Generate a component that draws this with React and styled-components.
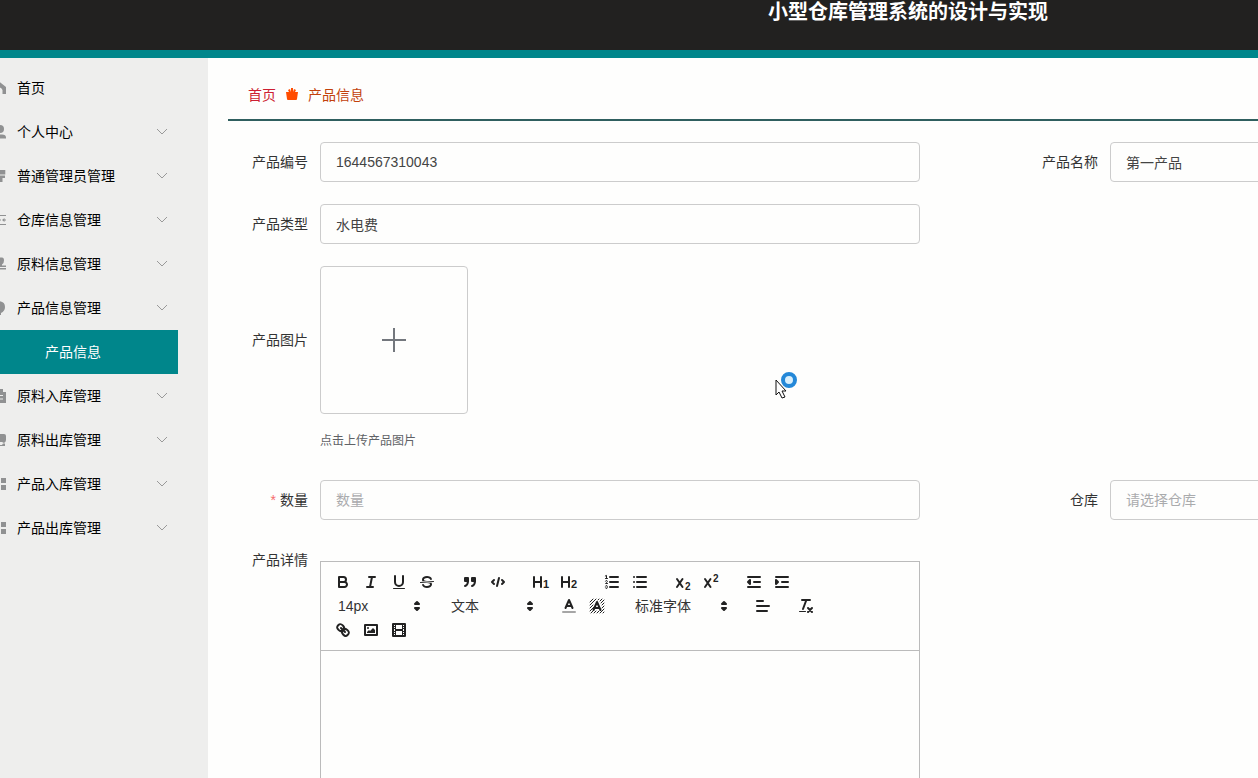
import React from "react";
import styled, { createGlobalStyle } from "styled-components";

const MENU = [
  { name: "首页", icon: "home" },
  { name: "个人中心", icon: "user", more: true },
  { name: "普通管理员管理", icon: "board", more: true },
  { name: "仓库信息管理", icon: "list", more: true },
  { name: "原料信息管理", icon: "stamp", more: true },
  { name: "产品信息管理", icon: "pin", more: true, children: ["产品信息"] },
  { name: "原料入库管理", icon: "clipboard", more: true },
  { name: "原料出库管理", icon: "monitor", more: true },
  { name: "产品入库管理", icon: "grid", more: true },
  { name: "产品出库管理", icon: "grid", more: true },
];

const menuIcons = {
  home: <path d="M9 2L18 9v7h-3.5v-4q-1-3-5.5-3t-5.500 3v4H0V9z" />,
  user: (
    <>
      <circle cx="12" cy="7" r="4" />
      <path d="M4 16.500v-1q0-3 4-3h6q4 0 4 3v1z" />
    </>
  ),
  board: <path d="M1 4h16.300v4.500H1zM1 9.500h16v2.500h-2.500v4h-3v-4H1z" />,
  list: <path d="M1 5h17v1H1zM1 14h17v1H1zM8 9.500h5v1H8zM14 10l2.500-2v1.500H18v1h-1.500V12z" />,
  stamp: <path d="M10 3.500h4q2 0 2 3t-2 4v1h4v1.500H6v-1.500h4zM6 14h12v1.500H6z" />,
  pin: <path d="M10 3q7 0 7 6q0 4-4 6v2h-3q-7-4-7-8q0-6 7-6z" />,
  clipboard: (
    <path
      fillRule="evenodd"
      d="M6 3h9v3h3v11H2V6h4zM9 9v1h6V9zM9 12.500v1h6v-1z"
    />
  ),
  monitor: <path d="M2 4h14q2 0 2 2v4q0 2-2 3l-2-1H2zM6 15h8l1-1.500 2 0v2.500H6z" />,
  grid: <path d="M6 4h5v5H6zM13 4h5v5h-5zM6 11h5v5H6zM13 11h5v5h-5z" />,
};

const tools = {
  加粗: (
    <>
      <path d="M5,4H9.5A2.5,2.5,0,0,1,12,6.5v0A2.5,2.5,0,0,1,9.5,9H5V4Z" />
      <path d="M5,9h5.5A2.5,2.5,0,0,1,13,11.5v0A2.5,2.5,0,0,1,10.5,14H5V9Z" />
    </>
  ),
  斜体: <path d="M7 4h6M5 14h6M8 14L10 4" />,
  下划线: (
    <>
      <path d="M5,3V9a4.012,4.012,0,0,0,4,4H9a4.012,4.012,0,0,0,4-4V3" />
      <rect className="fill" height="1" rx="0.5" width="12" x="3" y="15" />
    </>
  ),
  删除线: (
    <>
      <path className="thin" d="M15.5 8.5L2.5 9.5" />
      <path
        className="fill"
        d="M9.007,8C6.542,7.791,6,7.519,6,6.5,6,5.792,7.283,5,9,5c1.571,0,2.765.679,2.969,1.309a1,1,0,0,0,1.9-.617C13.356,4.106,11.354,3,9,3,6.2,3,4,4.538,4,6.5a3.2,3.2,0,0,0,.5,1.843Z"
      />
      <path
        className="fill"
        d="M8.984,10C11.457,10.208,12,10.479,12,11.5c0,.708-1.283,1.5-3,1.5-1.571,0-2.765-.679-2.969-1.309a1,1,0,1,0-1.9.617C4.644,13.894,6.646,15,9,15c2.8,0,5-1.538,5-3.5a3.2,3.2,0,0,0-.5-1.843Z"
      />
    </>
  ),
  引用: (
    <>
      <rect className="both" height="3" width="3" x="4" y="5" />
      <rect className="both" height="3" width="3" x="11" y="5" />
      <path d="M7,8c0,4.031-3,5-3,5M14,8c0,4.031-3,5-3,5" />
    </>
  ),
  代码: <path d="M5 7L3 9l2 2M13 7l2 2-2 2M10 5L8 13" />,
  一级标题: (
    <>
      <path d="M2 4v10M9 4v10M9 9H2" />
      <text x="11" y="15">1</text>
    </>
  ),
  二级标题: (
    <>
      <path d="M2 4v10M9 4v10M9 9H2" />
      <text x="11" y="15">2</text>
    </>
  ),
  有序列表: (
    <>
      <path d="M7 4h8M7 9h8M7 14h8" />
      <path className="thin" d="M2.5 5.5h2M2.3 3l1.2-.6v3" />
      <path
        className="thin"
        d="M4.5,10.5h-2c0-.234,1.85-1.076,1.85-2.234A0.959,0.959,0,0,0,2.5,8.156"
      />
      <path
        className="thin"
        d="M2.5,14.846a0.959,0.959,0,0,0,1.85-.109A0.7,0.7,0,0,0,3.75,14a0.688,0.688,0,0,0,.6-0.736,0.959,0.959,0,0,0-1.85-.109"
      />
    </>
  ),
  无序列表: <path d="M6 4h9M6 9h9M6 14h9M3 4h.01M3 9h.01M3 14h.01" />,
  下标: (
    <>
      <path d="M3 6l5.500 8M8.500 6l-5.500 8" />
      <text className="light" x="11" y="17">2</text>
    </>
  ),
  上标: (
    <>
      <path d="M3 6l5.500 8M8.500 6l-5.500 8" />
      <text className="light" x="11" y="9">2</text>
    </>
  ),
  减少缩进: (
    <>
      <path d="M3 14h12M3 4h12M9 9h6" />
      <path className="both" d="M5 7v4L3 9z" />
    </>
  ),
  增加缩进: (
    <>
      <path d="M3 14h12M3 4h12M9 9h6" />
      <path className="both" d="M3 7v4l2-2z" />
    </>
  ),
  文字颜色: (
    <>
      <path opacity="0.4" d="M3 15h12" />
      <path d="M5.5 11L9 3l3.5 8M11.63 9H6.38" />
    </>
  ),
  背景颜色: (
    <>
      <path
        className="thin"
        d="M2 5l3-3M2 8l6-6M2 11l3-3M2 14l4-4M3 16l3-3M6 16l2-2M9 16l2-2M12 16l4-4M15 16l1-1M10 3l1-1M12 4l2-2M13 6l3-3M14 8l2-2M14 11l2-2"
      />
      <path d="M5.5 13L9 5l3.5 8M11.63 11H6.38" />
    </>
  ),
  对齐方式: <path d="M3 9h12M3 14h10M3 4h6" />,
  清除格式: (
    <>
      <path d="M5 3h8M6 12l3.35-9M11 11l4 4M15 11l-4 4" />
      <rect className="fill" height="1" rx="0.5" width="7" x="2" y="14" />
    </>
  ),
  链接: (
    <>
      <path d="M7 7l4 4" />
      <path d="M8.9,4.577a3.476,3.476,0,0,1,.36,4.679A3.476,3.476,0,0,1,4.577,8.9C3.185,7.5,2.035,6.4,4.217,4.217S7.5,3.185,8.9,4.577Z" />
      <path d="M13.423,9.1a3.476,3.476,0,0,0-4.679-.36,3.476,3.476,0,0,0,.36,4.679c1.392,1.392,2.5,2.542,4.679.36S14.815,10.5,13.423,9.1Z" />
    </>
  ),
  图片: (
    <>
      <rect height="10" width="12" x="3" y="4" />
      <circle className="fill" cx="6" cy="7" r="1" />
      <path className="fill" d="M5 12v-1l2-2 1 1 3-3 2 2v3z" />
    </>
  ),
  视频: (
    <>
      <rect height="12" width="12" x="3" y="3" />
      <path
        className="fill"
        d="M5 3h1v12H5zM12 3h1v12h-1zM5 8h8v2H5zM3 5h3v1H3zM3 7h3v1H3zM3 10h3v1H3zM3 12h3v1H3zM12 5h3v1h-3zM12 7h3v1h-3zM12 10h3v1h-3zM12 12h3v1h-3z"
      />
    </>
  ),
};

const ToolGroup = ({ names }) => (
  <Group>
    {names.map((name) => (
      <Tool key={name} type="button" aria-label={name}>
        <ToolIcon viewBox="0 0 18 18">{tools[name]}</ToolIcon>
      </Tool>
    ))}
  </Group>
);

const ToolSelect = ({ label, value, wide }) => (
  <Group>
    <Picker $wide={wide}>
      <select aria-label={label} defaultValue={value}>
        <option>{value}</option>
      </select>
      <ToolIcon viewBox="0 0 18 18">
        <path className="both" d="M7 11l2 2 2-2zM7 7l2-2 2 2z" />
      </ToolIcon>
    </Picker>
  </Group>
);

const App = () => {
  return (
    <>
      <GlobalStyle />
      <Page>
        <Header>
          <h1>小型仓库管理系统的设计与实现</h1>
        </Header>
        <Body>
          <Sidebar>
            {MENU.map((item) => (
              <React.Fragment key={item.name}>
                <MenuItem href="#">
                  <MenuIcon viewBox="0 0 18 18">{menuIcons[item.icon]}</MenuIcon>
                  <span>{item.name}</span>
                  {item.more && (
                    <Arrow viewBox="0 0 12 12">
                      <path d="M1 4l5 5 5-5" />
                    </Arrow>
                  )}
                </MenuItem>
                {item.children?.map((child) => (
                  <SubItem href="#" key={child}>
                    {child}
                  </SubItem>
                ))}
              </React.Fragment>
            ))}
          </Sidebar>
          <Main>
            <Breadcrumb>
              <a href="#">首页</a>
              <svg viewBox="0 0 12 12" width="12" height="12">
                <path d="M0 4h12l-1 7q0 1-1 1H2q-1 0-1-1zM2 2l2-1 1 3H3zM5 0h2v4H5zM8 1l2 1-1 2H7z" />
              </svg>
              <span>产品信息</span>
            </Breadcrumb>
            <form>
              <Row>
                <Field>
                  <Label htmlFor="code">产品编号</Label>
                  <Input id="code" defaultValue="1644567310043" />
                </Field>
                <Field>
                  <Label htmlFor="name">产品名称</Label>
                  <Input id="name" defaultValue="第一产品" />
                </Field>
              </Row>
              <Row>
                <Field>
                  <Label htmlFor="type">产品类型</Label>
                  <Input id="type" defaultValue="水电费" />
                </Field>
              </Row>
              <Row>
                <Field>
                  <Label htmlFor="picture" $tall>
                    产品图片
                  </Label>
                  <Upload>
                    <UploadBox>
                      <input id="picture" type="file" />
                      <svg viewBox="0 0 24 24" width="24" height="24">
                        <path d="M12 0v24M0 12h24" />
                      </svg>
                    </UploadBox>
                    <Tip>点击上传产品图片</Tip>
                  </Upload>
                </Field>
              </Row>
              <Row $tight>
                <Field>
                  <Label htmlFor="count">
                    <Star>*</Star>数量
                  </Label>
                  <Input id="count" placeholder="数量" />
                </Field>
                <Field>
                  <Label htmlFor="store">仓库</Label>
                  <Select id="store">
                    <option>请选择仓库</option>
                  </Select>
                </Field>
              </Row>
              <Row>
                <Field>
                  <Label htmlFor="detail">产品详情</Label>
                  <Editor>
                    <Toolbar>
                      <ToolGroup names={["加粗", "斜体", "下划线", "删除线"]} />
                      <ToolGroup names={["引用", "代码"]} />
                      <ToolGroup names={["一级标题", "二级标题"]} />
                      <ToolGroup names={["有序列表", "无序列表"]} />
                      <ToolGroup names={["下标", "上标"]} />
                      <ToolGroup names={["减少缩进", "增加缩进"]} />
                      <ToolSelect label="字号" value="14px" />
                      <ToolSelect label="标题" value="文本" />
                      <ToolGroup names={["文字颜色", "背景颜色"]} />
                      <ToolSelect label="字体" value="标准字体" wide />
                      <ToolGroup names={["对齐方式"]} />
                      <ToolGroup names={["清除格式"]} />
                      <ToolGroup names={["链接", "图片", "视频"]} />
                    </Toolbar>
                    <TextArea id="detail" />
                  </Editor>
                </Field>
              </Row>
            </form>
          </Main>
        </Body>
        <Pointer viewBox="0 0 24 30" aria-hidden="true">
          <circle cx="15" cy="9" r="6" />
          <path d="M2 9v15l3-3 3 6 3-1-3-6h4z" />
        </Pointer>
      </Page>
    </>
  );
};

export default App;

const GlobalStyle = createGlobalStyle`
  * {
    box-sizing: border-box;
  }
  body {
    margin: 0;
    font-family: "Liberation Sans", "Noto Sans CJK SC", sans-serif;
    font-size: 14px;
    color: #333;
  }
  input, select, textarea, button {
    font: inherit;
  }
  a {
    text-decoration: none;
  }
`;

const Page = styled.div`
  position: relative;
  display: flex;
  flex-direction: column;
  height: 100vh;
  overflow: hidden;
  background: #fefefd;
`;
const Header = styled.header`
  flex: none;
  height: 58px;
  padding-left: 558px;
  background: #222120;
  border-bottom: 8px solid #00868b;
  text-align: center;
  h1 {
    margin: 0;
    font-size: 20px;
    line-height: 24px;
    color: #fff;
  }
`;
const Body = styled.div`
  flex: 1;
  display: flex;
  min-height: 0;
`;
const Sidebar = styled.nav`
  flex: none;
  width: 208px;
  padding: 8px 30px 0 0;
  background: #eeeeed;
`;
const MenuItem = styled.a`
  display: flex;
  align-items: center;
  height: 44px;
  padding: 0 10px 2px 0;
  color: #000;
  span {
    flex: 1;
  }
`;
const MenuIcon = styled.svg`
  width: 18px;
  height: 18px;
  margin: 0 11px 0 -12px;
  fill: #909192;
`;
const Arrow = styled.svg`
  width: 12px;
  height: 12px;
  fill: none;
  stroke: #999;
`;
const SubItem = styled.a`
  display: block;
  padding-left: 45px;
  line-height: 44px;
  background: #00868b;
  color: #fff;
`;
const Main = styled.main`
  flex: 1;
  min-width: 0;
  padding: 10px 0 0 20px;
  overflow: hidden;
`;
const Breadcrumb = styled.div`
  display: flex;
  align-items: center;
  gap: 10px;
  height: 53px;
  margin-bottom: 21px;
  padding-left: 20px;
  border-bottom: 2px solid #2f5f5f;
  a {
    color: #cd1f32;
  }
  span {
    color: #c2410c;
  }
  svg {
    fill: #ff4c00;
  }
`;
const Row = styled.div`
  display: grid;
  grid-template-columns: 692px minmax(692px, 1fr);
  column-gap: 98px;
  margin-bottom: ${(props) => (props.$tight ? "20px" : "22px")};
`;
const Field = styled.div`
  display: flex;
`;
const Label = styled.label`
  flex: none;
  width: 92px;
  padding-right: 12px;
  text-align: right;
  line-height: ${(props) => (props.$tall ? "148px" : "40px")};
`;
const Star = styled.span`
  margin-right: 4px;
  color: #f56c6c;
`;
const Input = styled.input`
  flex: 1;
  min-width: 0;
  height: 40px;
  padding: 0 15px;
  border: 1px solid #ccc;
  border-radius: 4px;
  background: transparent;
  color: #444;
  &::placeholder {
    color: #aaabad;
  }
`;
const Select = styled.select`
  flex: 1;
  height: 40px;
  padding: 0 15px;
  border: 1px solid #ccc;
  border-radius: 4px;
  background: transparent;
  color: #aaabad;
  appearance: none;
`;
const Upload = styled.div`
  flex: 1;
`;
const UploadBox = styled.label`
  display: flex;
  align-items: center;
  justify-content: center;
  width: 148px;
  height: 148px;
  border: 1px solid #ccc;
  border-radius: 4px;
  input {
    position: absolute;
    width: 1px;
    height: 1px;
    opacity: 0;
  }
  svg {
    stroke: #73777d;
    stroke-width: 2;
  }
`;
const Tip = styled.div`
  margin-top: 16px;
  padding-bottom: 6px;
  font-size: 12px;
  line-height: 22px;
  color: #606266;
`;
const Editor = styled.div`
  flex: 1;
  margin-top: 21px;
`;
const Toolbar = styled.div`
  display: flex;
  flex-wrap: wrap;
  padding: 8px;
  border: 1px solid #bbb;
`;
const Group = styled.div`
  display: flex;
  margin-right: 15px;
`;
const Tool = styled.button`
  width: 28px;
  height: 24px;
  padding: 3px 5px;
  border: none;
  background: none;
`;
const ToolIcon = styled.svg`
  display: block;
  width: 18px;
  height: 18px;
  fill: none;
  stroke: #222;
  stroke-width: 2;
  stroke-linecap: round;
  stroke-linejoin: round;
  .thin {
    stroke-width: 1;
  }
  .fill {
    fill: #222;
    stroke: none;
  }
  .both {
    fill: #222;
  }
  text {
    fill: #222;
    stroke: none;
    font-size: 11px;
    font-weight: bold;
  }
  .light {
    font-size: 10px;
  }
`;
const Picker = styled.div`
  position: relative;
  width: ${(props) => (props.$wide ? "108px" : "98px")};
  height: 24px;
  select {
    width: 100%;
    height: 24px;
    padding: 0 20px 0 9px;
    border: none;
    background: none;
    color: #333;
    appearance: none;
  }
  svg {
    position: absolute;
    top: 3px;
    right: 1px;
    pointer-events: none;
  }
`;
const TextArea = styled.textarea`
  display: block;
  width: 100%;
  height: 400px;
  padding: 12px 15px;
  border: 1px solid #bbb;
  border-top: none;
  background: transparent;
  resize: none;
`;
const Pointer = styled.svg`
  position: absolute;
  left: 774px;
  top: 371px;
  width: 24px;
  height: 30px;
  circle {
    fill: #d9effc;
    stroke: #2488d8;
    stroke-width: 4;
  }
  path {
    fill: #fff;
    stroke: #111;
  }
`;
